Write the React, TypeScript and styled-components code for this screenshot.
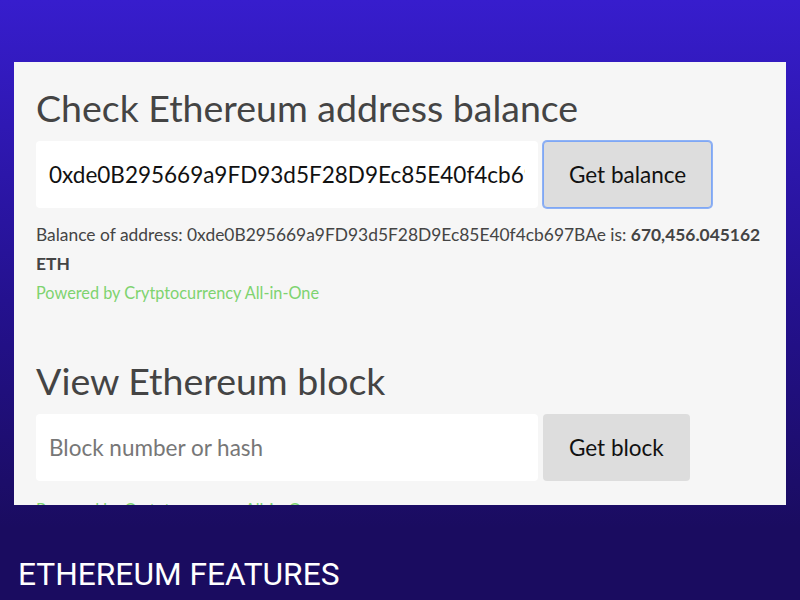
import React from 'react';
import styled, { createGlobalStyle, css } from 'styled-components';

const GlobalStyle = createGlobalStyle`
  html, body {
    margin: 0;
    padding: 0;
  }
  body {
    width: 800px;
    height: 600px;
    overflow: hidden;
    background: linear-gradient(180deg, #371dcd 0%, #24118f 50%, #1a0c60 88%, #1a0c60 100%);
    font-family: Lato, 'Open Sans', sans-serif;
  }
`;

const Page = styled.div`
  height: 600px;
  display: flex;
  flex-direction: column;
  padding-top: 62px;
  box-sizing: border-box;
`;

const Frame = styled.div`
  margin: 0 14px;
  height: 443px;
  flex-shrink: 0;
  overflow: hidden;
  background: #f6f6f6;
  padding: 23px 22px 0;
  box-sizing: border-box;
`;

const Widget = styled.section`
  & + & {
    margin-top: 54px;
  }
`;

const Heading = styled.h2`
  margin: 0;
  font-family: Lato, sans-serif;
  font-weight: 400;
  font-size: 37.5px;
  line-height: 1.2;
  color: #444;
`;

const FormRow = styled.div`
  display: flex;
  gap: 5px;
  margin-top: 11px;
  height: 67px;
`;

const Field = styled.input`
  width: 502px;
  height: 67px;
  box-sizing: border-box;
  border: none;
  border-radius: 4px;
  background: #fff;
  padding: 0 13px;
  font-family: Lato, sans-serif;
  font-size: 22.5px;
  color: #111;
  outline: none;
  &::placeholder {
    color: #777;
  }
`;

const Button = styled.button<{ focused?: boolean }>`
  height: 67px;
  box-sizing: border-box;
  padding: 0 25px;
  border: 1px solid transparent;
  border-radius: 4px;
  background: #dddddd;
  font-family: Lato, sans-serif;
  font-size: 22.5px;
  color: #111;
  cursor: pointer;
  ${(p) =>
    p.focused &&
    css`
      border-color: #7ea7f5;
      box-shadow: 0 0 0 1px #8fb2f5;
    `}
`;

const Result = styled.p`
  margin: 12px 0 0;
  font-size: 17.4px;
  line-height: 29px;
  color: #444;
  b {
    font-weight: 700;
  }
`;

const Credit = styled.p<{ gap: number }>`
  margin: ${(p) => p.gap}px 0 0;
  font-size: 16.3px;
  line-height: 22px;
  color: #7ed36f;
`;

const FooterTitle = styled.h1`
  margin: 52px 0 0 18px;
  font-family: Roboto, sans-serif;
  font-weight: 400;
  font-size: 31.7px;
  line-height: 36px;
  color: #fff;
`;

const address = '0xde0B295669a9FD93d5F28D9Ec85E40f4cb697BAe';

export default function App() {
  return (
    <>
      <GlobalStyle />
      <Page>
        <Frame>
          <Widget>
            <Heading>Check Ethereum address balance</Heading>
            <FormRow>
              <Field defaultValue={address} />
              <Button focused>Get balance</Button>
            </FormRow>
            <Result>
              Balance of address: {address} is: <b>670,456.045162 ETH</b>
            </Result>
            <Credit gap={4}>Powered by Crytptocurrency All-in-One</Credit>
          </Widget>
          <Widget>
            <Heading>View Ethereum block</Heading>
            <FormRow>
              <Field placeholder="Block number or hash" />
              <Button>Get block</Button>
            </FormRow>
            <Credit gap={18}>Powered by Crytptocurrency All-in-One</Credit>
          </Widget>
        </Frame>
        <FooterTitle>ETHEREUM FEATURES</FooterTitle>
      </Page>
    </>
  );
}
